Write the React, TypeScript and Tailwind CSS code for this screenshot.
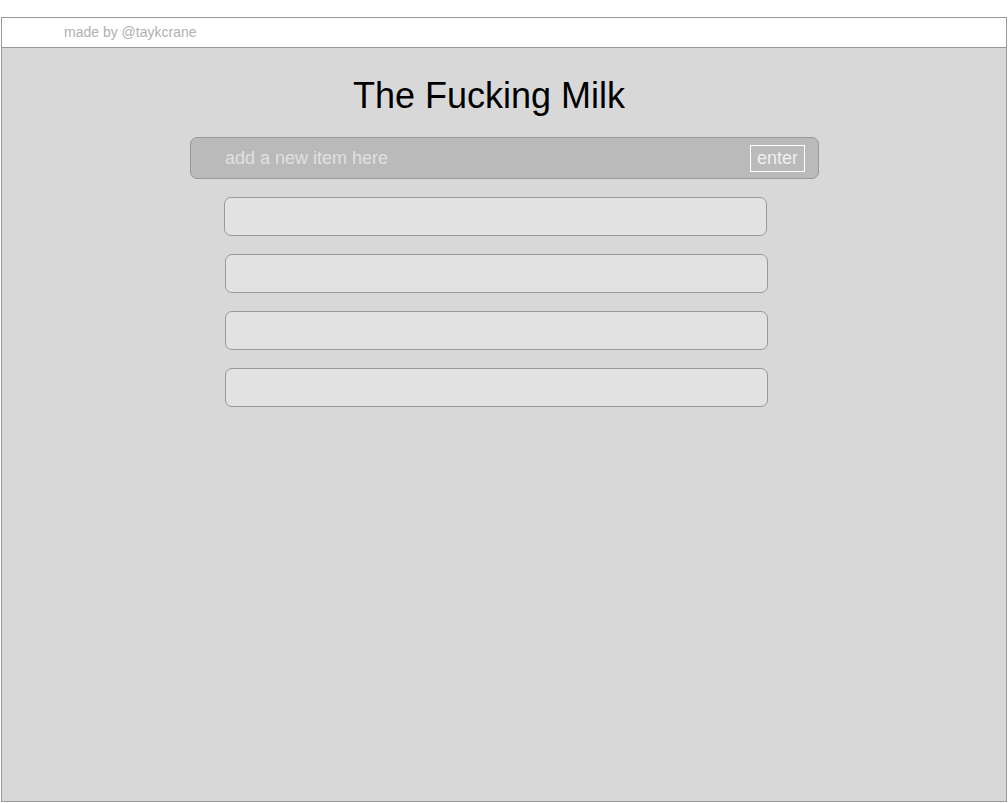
export default function App() {
  const items = ['', '', '', ''];

  return (
    <div className="min-h-[803px] w-[1008px] bg-white pt-[17px] pl-[1px] font-['Liberation_Sans',Arial,sans-serif]">
      <div className="flex h-[785px] w-[1006px] flex-col border border-[#999] bg-[#d8d8d8]">
        {/* Header */}
        <div className="flex h-[30px] items-center border-b border-[#999] bg-white pl-[62px]">
          <span className="text-[14px] text-[#b0b0b0]">made by @taykcrane</span>
        </div>

        {/* Title */}
        <h1 className="mt-[30px] pr-[30px] text-center text-[36px] leading-none text-black">The Fucking Milk</h1>

        {/* New item input */}
        <div className="mt-[23px] ml-[188px] flex h-[42px] w-[629px] items-center rounded-[7px] border border-[#999] bg-[#bababa] pl-[34px] pr-[13px]">
          <span className="flex-1 text-[18px] text-[#e0e0e0]">add a new item here</span>
          <button className="flex h-[27px] w-[55px] items-center justify-center border border-white text-[18px] text-[#f0f0f0]">
            enter
          </button>
        </div>

        {/* Items */}
        <div className="mt-[18px] flex flex-col gap-[18px]">
          {items.map((item, i) => (
            <div
              key={i}
              className={
                'h-[39px] w-[543px] rounded-[7px] border border-[#999] bg-[#e2e2e2] ' +
                (i === 0 ? 'ml-[222px]' : 'ml-[223px]')
              }
            >
              {item}
            </div>
          ))}
        </div>
      </div>
    </div>
  );
}
